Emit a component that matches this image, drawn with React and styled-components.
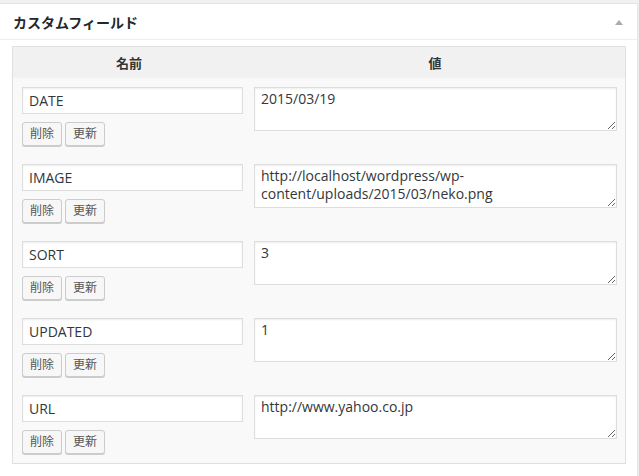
import React from "react";
import styled, { createGlobalStyle } from "styled-components";

const GlobalStyle = createGlobalStyle`
  html, body {
    margin: 0;
    padding: 0;
    background: #f1f1f1;
    overflow: hidden;
  }
  body {
    font-family: "Open Sans", "Noto Sans CJK JP", sans-serif;
    color: #444;
  }
`;

const Postbox = styled.div`
  margin: 3px 0 0 -1px;
  width: 639px;
  box-sizing: border-box;
  min-height: 480px;
  background: #fff;
  border: 1px solid #e5e5e5;
  box-shadow: 0 1px 1px rgba(0, 0, 0, 0.04);
`;

const Header = styled.div`
  height: 35px;
  display: flex;
  align-items: center;
  justify-content: space-between;
  padding: 0 14px 0 13px;
  border-bottom: 1px solid #eee;
`;

const Title = styled.h3`
  margin: 0;
  font-size: 14px;
  font-weight: 700;
  color: #23282d;
  font-family: "Open Sans", "Noto Sans CJK JP", sans-serif;
`;

const Toggle = styled.span`
  width: 0;
  height: 0;
  border-left: 4px solid transparent;
  border-right: 4px solid transparent;
  border-bottom: 5px solid #aaa;
  margin-top: 2px;
`;

const Inside = styled.div`
  padding: 6px 12px 12px 12px;
`;

const Table = styled.div`
  width: 614px;
  box-sizing: border-box;
  border: 1px solid #dfdfdf;
  background: #f9f9f9;
`;

const Grid = styled.div`
  display: grid;
  grid-template-columns: 232px 1fr;
`;

const HeadRow = styled(Grid)`
  height: 31px;
  background: #f1f1f1;
  align-items: center;
`;

const HeadCell = styled.div`
  text-align: center;
  font-size: 13px;
  font-weight: 700;
  color: #333;
`;

const Row = styled(Grid)`
  padding: 9px 0;
`;

const NameCell = styled.div`
  padding-left: 9px;
  display: flex;
  flex-direction: column;
`;

const ValueCell = styled.div`
  padding: 0 9px;
`;

const NameInput = styled.input`
  width: 221px;
  height: 27px;
  box-sizing: border-box;
  border: 1px solid #ddd;
  box-shadow: inset 0 1px 2px rgba(0, 0, 0, 0.07);
  padding: 3px 6px;
  margin: 0;
  font-family: "Open Sans", "Noto Sans CJK JP", sans-serif;
  font-size: 14px;
  color: #32373c;
  background: #fff;
  outline: none;
`;

const Buttons = styled.div`
  display: flex;
  gap: 3px;
  margin-top: 8px;
`;

const SmallButton = styled.button`
  height: 24px;
  width: 40px;
  padding: 0;
  border: 1px solid #ccc;
  border-radius: 3px;
  background: #f7f7f7;
  box-shadow: 0 1px 0 #ccc;
  color: #555;
  font-family: "Open Sans", "Noto Sans CJK JP", sans-serif;
  font-size: 12px;
  line-height: 22px;
  cursor: pointer;
`;

const ValueArea = styled.textarea`
  display: block;
  width: 363px;
  height: 44px;
  box-sizing: border-box;
  border: 1px solid #ddd;
  box-shadow: inset 0 1px 2px rgba(0, 0, 0, 0.07);
  padding: 2px 6px;
  margin: 0;
  font-family: "Open Sans", "Noto Sans CJK JP", sans-serif;
  font-size: 14px;
  line-height: 18px;
  color: #32373c;
  background: #fff;
  resize: vertical;
  outline: none;
`;

const fields = [
  { name: "DATE", value: "2015/03/19" },
  { name: "IMAGE", value: "http://localhost/wordpress/wp-content/uploads/2015/03/neko.png" },
  { name: "SORT", value: "3" },
  { name: "UPDATED", value: "1" },
  { name: "URL", value: "http://www.yahoo.co.jp" },
];

const App = () => (
  <>
    <GlobalStyle />
    <Postbox>
      <Header>
        <Title>カスタムフィールド</Title>
        <Toggle />
      </Header>
      <Inside>
        <Table>
          <HeadRow>
            <HeadCell>名前</HeadCell>
            <HeadCell>値</HeadCell>
          </HeadRow>
          {fields.map((f) => (
            <Row key={f.name}>
              <NameCell>
                <NameInput defaultValue={f.name} />
                <Buttons>
                  <SmallButton>削除</SmallButton>
                  <SmallButton>更新</SmallButton>
                </Buttons>
              </NameCell>
              <ValueCell>
                <ValueArea defaultValue={f.value} />
              </ValueCell>
            </Row>
          ))}
        </Table>
      </Inside>
    </Postbox>
  </>
);

export default App;
